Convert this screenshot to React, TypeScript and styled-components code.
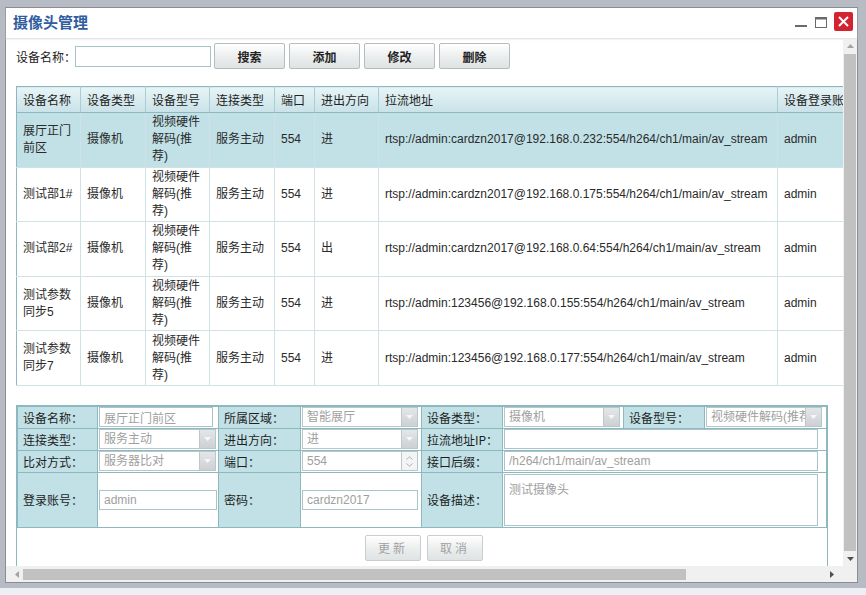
import React from 'react'
import styled, { createGlobalStyle } from 'styled-components'

const GlobalStyle = createGlobalStyle`
  html, body {
    margin: 0;
    padding: 0;
  }
  body {
    background: #b7bbc3;
    font-family: "Liberation Sans", "Noto Sans CJK SC", sans-serif;
    font-size: 12px;
    color: #222;
  }
`

const Backdrop = styled.div`
  width: 866px;
  height: 595px;
  box-sizing: border-box;
  padding: 7px 0 0 5px;
  overflow: hidden;
  background: #b7bbc3;
`

const Window = styled.div`
  width: 853px;
  height: 576px;
  box-sizing: border-box;
  border: 1px solid #8a8e94;
  background: #fff;
  display: flex;
  flex-direction: column;
`

const BottomStrip = styled.div`
  margin: 5px 0 0 -5px;
  height: 12px;
  background: #eceff6;
`

const TitleBar = styled.div`
  height: 31px;
  box-sizing: border-box;
  flex: none;
  display: flex;
  align-items: center;
  padding: 0 4px 3px 7px;
  border-bottom: 1px solid #e4e6e8;
  box-shadow: 0 1px 1px #f2f3f4;
`

const Title = styled.div`
  flex: 1;
  font-family: "Noto Sans CJK SC", sans-serif;
  font-size: 15px;
  font-weight: bold;
  color: #2f5d9e;
`

const Controls = styled.div`
  display: flex;
  align-items: center;
  gap: 6px;
`

const CtrlIcon = styled.svg`
  display: block;
`

const CloseBtn = styled.div`
  width: 19px;
  height: 19px;
  border-radius: 2px;
  background: #d42330;
  display: flex;
  align-items: center;
  justify-content: center;
`

const Body = styled.div`
  flex: 1;
  min-height: 0;
  display: grid;
  grid-template-columns: 1fr 14px;
  grid-template-rows: 1fr 16px;
`

const Viewport = styled.div`
  overflow: hidden;
  padding: 4px 0 0 10px;
`

const VScroll = styled.div`
  background: #f0f0f0;
  display: flex;
  flex-direction: column;
  align-items: center;
`

const HScroll = styled.div`
  background: #f0f0f0;
  display: flex;
  align-items: center;
  padding: 0 6px 0 5px;
`

const Corner = styled.div`
  background: #f0f0f0;
`

const ArrowBox = styled.div<{ $size: number }>`
  width: ${p => p.$size}px;
  height: ${p => p.$size}px;
  flex: none;
  display: flex;
  align-items: center;
  justify-content: center;
`

const VThumb = styled.div`
  width: 12px;
  flex: 1;
  margin: 1px 0;
  background: #c1c1c1;
`

const HThumb = styled.div`
  width: 663px;
  height: 11px;
  background: #c1c1c1;
  margin-left: 1px;
`

const HSpacer = styled.div`
  flex: 1;
`

/* search bar */
const SearchRow = styled.div`
  display: flex;
  align-items: center;
  height: 26px;
`

const SearchLabel = styled.span`
  flex: none;
  width: 59px;
  white-space: nowrap;
  font-family: "Noto Sans CJK SC", sans-serif;
  color: #222;
`

const SearchInput = styled.input`
  flex: none;
  box-sizing: border-box;
  width: 136px;
  height: 21px;
  border: 1px solid #a5c4ca;
  outline: none;
  padding: 0 3px;
  margin: 0 3px 0 0;
`

const ToolButton = styled.button<{ $disabled?: boolean }>`
  flex: none;
  box-sizing: border-box;
  width: ${p => (p.$disabled ? 56 : 71)}px;
  height: 26px;
  margin: 0 ${p => (p.$disabled ? 6 : 4)}px 0 0;
  padding: 0;
  border: 1px solid ${p => (p.$disabled ? '#c9cdcf' : '#b7bcbe')};
  border-radius: 2px;
  background: linear-gradient(#ffffff, #e9ecec 60%, #dfe3e4);
  font-family: "Noto Sans CJK SC", sans-serif;
  font-size: 12px;
  font-weight: ${p => (p.$disabled ? 'normal' : 'bold')};
  letter-spacing: ${p => (p.$disabled ? '3px' : '0')};
  color: ${p => (p.$disabled ? '#a2a2a2' : '#222')};
  &:last-child {
    margin-right: 0;
  }
`

/* device grid */
const Grid = styled.table<{ $w: number }>`
  margin-top: 17px;
  border-collapse: collapse;
  table-layout: fixed;
  width: ${p => p.$w}px;
  border: 1px solid #8db8c0;
`

const HeadCell = styled.th`
  height: 25px;
  padding: 0 6px;
  text-align: left;
  font-weight: normal;
  white-space: nowrap;
  overflow: hidden;
  color: #222;
  background: linear-gradient(#e7f4f6, #c8e2e8);
  border-right: 1px solid #a9cdd4;
  border-bottom: 1px solid #8db8c0;
`

const Row = styled.tr<{ $selected?: boolean }>`
  height: 54.6px;
  background: ${p => (p.$selected ? '#c1e1e7' : '#fff')};
`

const Cell = styled.td`
  padding: 0 6px;
  line-height: 17px;
  color: #2a2a2a;
  vertical-align: middle;
  border-right: 1px solid #d0e2e6;
  border-bottom: 1px solid #d0e2e6;
  overflow: hidden;
  white-space: nowrap;
`

const WrapCell = styled(Cell)`
  white-space: normal;
`

/* edit form */
const FormBox = styled.div`
  margin-top: 19px;
  width: 810px;
  border: 1px solid #8db8c0;
  padding-bottom: 20px;
`

const FormTable = styled.table`
  width: 100%;
  border-collapse: collapse;
  table-layout: fixed;
`

const FormRow = styled.tr<{ $tall?: boolean }>`
  height: ${p => (p.$tall ? 55 : 22)}px;
`

const Label = styled.td`
  background: #c1e1e7;
  border: 1px solid #8db8c0;
  padding: 0 5px;
  white-space: nowrap;
  overflow: hidden;
  color: #1e1e1e;
  font-family: "Noto Sans CJK SC", sans-serif;
`

const FieldCell = styled.td`
  border: 1px solid #8db8c0;
  padding: 0 0 0 1px;
  background: #fff;
  vertical-align: middle;
`

const TextBox = styled.input<{ $w: number }>`
  display: block;
  box-sizing: border-box;
  width: ${p => p.$w}px;
  height: 20px;
  margin: 0;
  border: 1px solid #a9c5ca;
  outline: none;
  padding: 0 4px;
  font-family: "Liberation Sans", "Noto Sans CJK SC", sans-serif;
  font-size: 12px;
  color: #a0a0a0;
  background: #fff;
`

const TextArea = styled.textarea`
  display: block;
  box-sizing: border-box;
  width: 314px;
  height: 52px;
  margin: 0;
  border: 1px solid #a9c5ca;
  outline: none;
  resize: none;
  padding: 5px 4px;
  font-family: "Noto Sans CJK SC", sans-serif;
  font-size: 12px;
  color: #a0a0a0;
`

const Combo = styled.div<{ $w: number }>`
  box-sizing: border-box;
  width: ${p => p.$w}px;
  height: 20px;
  display: flex;
  border: 1px solid #b5c8cc;
  background: #fff;
`

const ComboText = styled.span`
  flex: 1;
  min-width: 0;
  overflow: hidden;
  white-space: nowrap;
  padding-left: 4px;
  line-height: 18px;
  color: #a0a0a0;
`

const ComboArrow = styled.span<{ $light?: boolean }>`
  width: 15px;
  flex: none;
  display: flex;
  flex-direction: column;
  align-items: center;
  justify-content: center;
  gap: 3px;
  background: ${p => (p.$light ? '#f3f4f5' : 'linear-gradient(#e4e6e8, #cdd1d4)')};
  border-left: 1px solid #c2c7ca;
`

const ButtonRow = styled.div`
  display: flex;
  justify-content: center;
  padding: 7px 0 0 4px;
`

type Device = {
  name: string
  conn: string
  dir: string
  url: string
  pwd: string
  selected?: boolean
}

const devices: Device[] = [
  { name: '展厅正门前区', conn: '服务主动', dir: '进', url: 'rtsp://admin:cardzn2017@192.168.0.232:554/h264/ch1/main/av_stream', pwd: 'cardzn2017', selected: true },
  { name: '测试部1#', conn: '服务主动', dir: '进', url: 'rtsp://admin:cardzn2017@192.168.0.175:554/h264/ch1/main/av_stream', pwd: 'cardzn2017' },
  { name: '测试部2#', conn: '服务主动', dir: '出', url: 'rtsp://admin:cardzn2017@192.168.0.64:554/h264/ch1/main/av_stream', pwd: 'cardzn2017' },
  { name: '测试参数同步5', conn: '服务主动', dir: '进', url: 'rtsp://admin:123456@192.168.0.155:554/h264/ch1/main/av_stream', pwd: '123456' },
  { name: '测试参数同步7', conn: '服务主动', dir: '进', url: 'rtsp://admin:123456@192.168.0.177:554/h264/ch1/main/av_stream', pwd: '123456' },
]

const columns = [
  { title: '设备名称', width: 64 },
  { title: '设备类型', width: 65 },
  { title: '设备型号', width: 64 },
  { title: '连接类型', width: 65 },
  { title: '端口', width: 40 },
  { title: '进出方向', width: 64 },
  { title: '拉流地址', width: 399 },
  { title: '设备登录账号', width: 100 },
  { title: '设备登录密码', width: 120 },
]

const gridWidth = columns.reduce((sum, c) => sum + c.width, 0)

const DownTri = ({ color = '#fff' }: { color?: string }) => (
  <svg width="7" height="4" viewBox="0 0 7 4">
    <path d="M0 0h7L3.5 4z" fill={color} />
  </svg>
)

const Select = ({ w, text }: { w: number; text: string }) => (
  <Combo $w={w}>
    <ComboText>{text}</ComboText>
    <ComboArrow>
      <DownTri color="#f7f7f7" />
    </ComboArrow>
  </Combo>
)

const Spinner = ({ w, text }: { w: number; text: string }) => (
  <Combo $w={w}>
    <ComboText>{text}</ComboText>
    <ComboArrow $light>
      <svg width="7" height="4" viewBox="0 0 7 4">
        <path d="M0.5 3.5L3.5 0.8L6.5 3.5" fill="none" stroke="#b0b0b0" />
      </svg>
      <svg width="7" height="4" viewBox="0 0 7 4">
        <path d="M0.5 0.5L3.5 3.2L6.5 0.5" fill="none" stroke="#b0b0b0" />
      </svg>
    </ComboArrow>
  </Combo>
)

export default function App() {
  return (
    <Backdrop>
      <GlobalStyle />
      <Window>
        <TitleBar>
          <Title>摄像头管理</Title>
          <Controls>
            <CtrlIcon width="14" height="14" viewBox="0 0 14 14">
              <rect x="1" y="10" width="12" height="2" fill="#6a6a6a" />
            </CtrlIcon>
            <CtrlIcon width="14" height="14" viewBox="0 0 14 14">
              <rect x="1.5" y="2.5" width="11" height="10" fill="none" stroke="#6a6a6a" />
              <rect x="1" y="2" width="12" height="2.5" fill="#6a6a6a" />
            </CtrlIcon>
            <CloseBtn>
              <svg width="11" height="11" viewBox="0 0 11 11">
                <path d="M1 1L10 10M10 1L1 10" stroke="#fff" strokeWidth="2" />
              </svg>
            </CloseBtn>
          </Controls>
        </TitleBar>
        <Body>
          <Viewport>
            <SearchRow>
              <SearchLabel>设备名称：</SearchLabel>
              <SearchInput />
              <ToolButton>搜索</ToolButton>
              <ToolButton>添加</ToolButton>
              <ToolButton>修改</ToolButton>
              <ToolButton>删除</ToolButton>
            </SearchRow>

            <Grid $w={gridWidth}>
              <colgroup>
                {columns.map(c => (
                  <col key={c.title} style={{ width: c.width }} />
                ))}
              </colgroup>
              <thead>
                <tr>
                  {columns.map(c => (
                    <HeadCell key={c.title}>{c.title}</HeadCell>
                  ))}
                </tr>
              </thead>
              <tbody>
                {devices.map(d => (
                  <Row key={d.name} $selected={d.selected}>
                    <WrapCell>{d.name}</WrapCell>
                    <Cell>摄像机</Cell>
                    <WrapCell>视频硬件解码(推荐)</WrapCell>
                    <Cell>{d.conn}</Cell>
                    <Cell>554</Cell>
                    <Cell>{d.dir}</Cell>
                    <Cell>{d.url}</Cell>
                    <Cell>admin</Cell>
                    <Cell>{d.pwd}</Cell>
                  </Row>
                ))}
              </tbody>
            </Grid>

            <FormBox>
              <FormTable>
                <colgroup>
                  <col style={{ width: 80 }} />
                  <col style={{ width: 121 }} />
                  <col style={{ width: 82 }} />
                  <col style={{ width: 121 }} />
                  <col style={{ width: 81 }} />
                  <col style={{ width: 121 }} />
                  <col style={{ width: 81 }} />
                  <col style={{ width: 122 }} />
                </colgroup>
                <tbody>
                  <FormRow>
                    <Label>设备名称：</Label>
                    <FieldCell>
                      <TextBox $w={114} readOnly defaultValue="展厅正门前区" />
                    </FieldCell>
                    <Label>所属区域：</Label>
                    <FieldCell>
                      <Select w={116} text="智能展厅" />
                    </FieldCell>
                    <Label>设备类型：</Label>
                    <FieldCell>
                      <Select w={116} text="摄像机" />
                    </FieldCell>
                    <Label>设备型号：</Label>
                    <FieldCell>
                      <Select w={116} text="视频硬件解码(推荐)" />
                    </FieldCell>
                  </FormRow>
                  <FormRow>
                    <Label>连接类型：</Label>
                    <FieldCell>
                      <Select w={117} text="服务主动" />
                    </FieldCell>
                    <Label>进出方向：</Label>
                    <FieldCell>
                      <Select w={116} text="进" />
                    </FieldCell>
                    <Label>拉流地址IP：</Label>
                    <FieldCell colSpan={3}>
                      <TextBox $w={314} readOnly defaultValue="" />
                    </FieldCell>
                  </FormRow>
                  <FormRow>
                    <Label>比对方式：</Label>
                    <FieldCell>
                      <Select w={117} text="服务器比对" />
                    </FieldCell>
                    <Label>端口：</Label>
                    <FieldCell>
                      <Spinner w={116} text="554" />
                    </FieldCell>
                    <Label>接口后缀：</Label>
                    <FieldCell colSpan={3}>
                      <TextBox $w={314} readOnly defaultValue="/h264/ch1/main/av_stream" />
                    </FieldCell>
                  </FormRow>
                  <FormRow $tall>
                    <Label>登录账号：</Label>
                    <FieldCell>
                      <TextBox $w={118} readOnly defaultValue="admin" />
                    </FieldCell>
                    <Label>密码：</Label>
                    <FieldCell>
                      <TextBox $w={116} readOnly defaultValue="cardzn2017" />
                    </FieldCell>
                    <Label>设备描述：</Label>
                    <FieldCell colSpan={3}>
                      <TextArea readOnly defaultValue="测试摄像头" />
                    </FieldCell>
                  </FormRow>
                </tbody>
              </FormTable>
              <ButtonRow>
                <ToolButton $disabled disabled>更新</ToolButton>
                <ToolButton $disabled disabled>取消</ToolButton>
              </ButtonRow>
            </FormBox>
          </Viewport>

          <VScroll>
            <ArrowBox $size={14}>
              <svg width="7" height="4" viewBox="0 0 7 4">
                <path d="M0 4h7L3.5 0z" fill="#a3a3a3" />
              </svg>
            </ArrowBox>
            <VThumb />
            <ArrowBox $size={14}>
              <DownTri color="#505050" />
            </ArrowBox>
          </VScroll>

          <HScroll>
            <ArrowBox $size={11}>
              <svg width="4" height="7" viewBox="0 0 4 7">
                <path d="M4 0v7L0 3.5z" fill="#a3a3a3" />
              </svg>
            </ArrowBox>
            <HThumb />
            <HSpacer />
            <ArrowBox $size={11}>
              <svg width="4" height="7" viewBox="0 0 4 7">
                <path d="M0 0v7L4 3.5z" fill="#505050" />
              </svg>
            </ArrowBox>
          </HScroll>
          <Corner />
        </Body>
      </Window>
      <BottomStrip />
    </Backdrop>
  )
}
